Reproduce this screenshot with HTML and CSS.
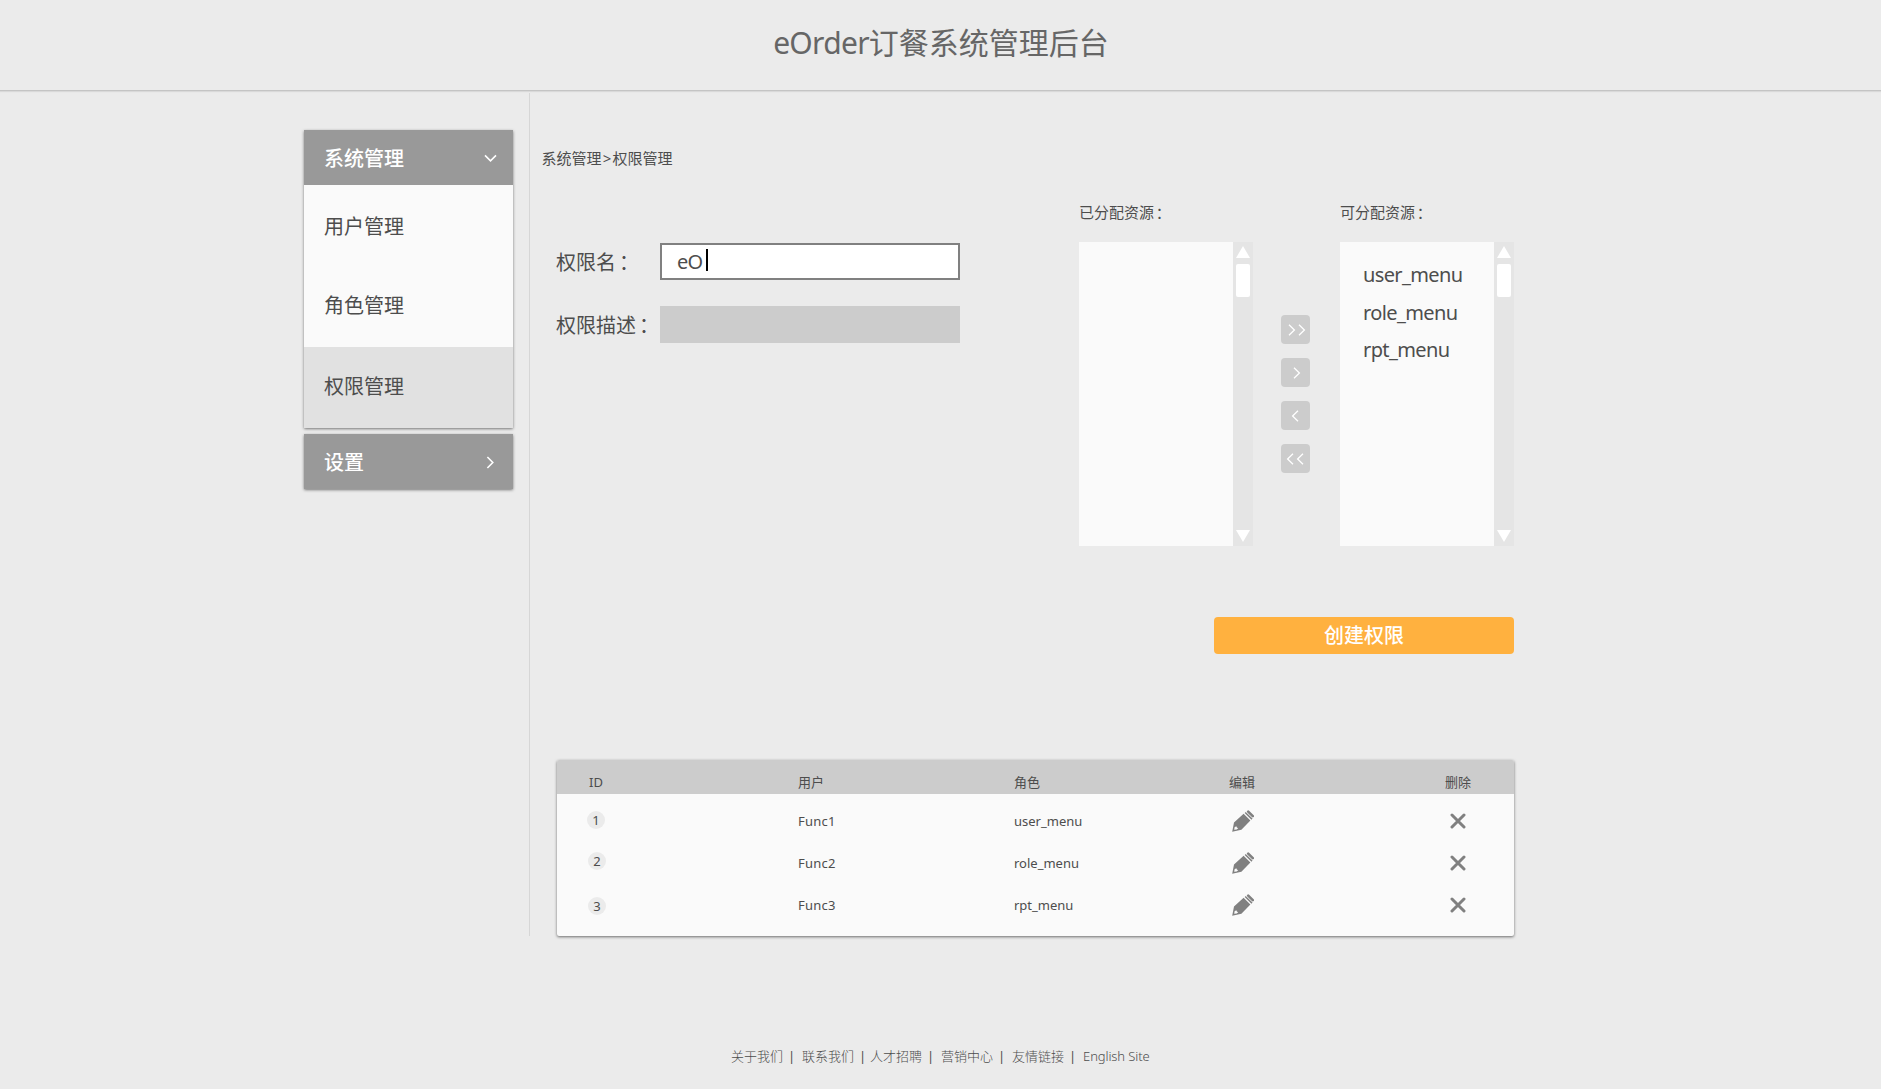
FILE: index.html
```html
<!DOCTYPE html>
<html lang="zh-CN">
<head>
<meta charset="utf-8">
<title>eOrder订餐系统管理后台</title>
<link rel="stylesheet" href="styles.css">
</head>
<body>
<svg class="sprite" width="0" height="0" aria-hidden="true">
  <symbol id="pencil" viewBox="0 0 22 22">
    <path fill="#808080" fill-rule="evenodd" d="M0.2 21.8 2 12.6 11.6 3.8 18.4 10.4 9.4 19.8ZM2.6 17.2 2.2 19.8 4.6 19.4 6.2 18.2 4.9 17.5 4.3 16.2Z"/>
    <path stroke="#808080" stroke-width="1.5" d="m13.2 2.5 6.8 6.6"/>
    <path stroke="#808080" stroke-width="2.6" stroke-linecap="round" d="m16.2 1.6 4.6 4.5"/>
  </symbol>
  <symbol id="cross" viewBox="0 0 16 16">
    <path stroke="#808080" stroke-width="3" stroke-linecap="round" d="m2 2 12 12M14 2 2 14"/>
  </symbol>
  <symbol id="right" viewBox="0 0 8 12">
    <path fill="none" stroke="currentColor" stroke-width="1.3" d="m1 .8 5.4 5.2L1 11.2"/>
  </symbol>
  <symbol id="left" viewBox="0 0 8 12">
    <path fill="none" stroke="currentColor" stroke-width="1.3" d="M7 .8 1.6 6 7 11.2"/>
  </symbol>
</svg>
<header class="top"><h1><span class="lat">eOrder</span>订餐系统管理后台</h1></header>
<main class="main">
  <nav class="side">
    <section class="group">
      <div class="group-head">系统管理<svg class="chev" width="13" height="9" viewBox="0 0 13 9"><path fill="none" stroke="#fff" stroke-width="1.6" d="m1 1.4 5.5 5.4L12 1.4"/></svg></div>
      <a class="item">用户管理</a>
      <a class="item raised">角色管理</a>
      <a class="item raised active">权限管理</a>
    </section>
    <section class="group">
      <div class="group-head">设置<svg class="chev chev-r" width="9" height="13" viewBox="0 0 9 13"><path fill="none" stroke="#fff" stroke-width="1.6" d="m1.4 1 5.4 5.5L1.4 12"/></svg></div>
    </section>
  </nav>
  <div class="content">
    <div class="crumb">系统管理<span class="gt">&gt;</span>权限管理</div>
    <div class="editor">
      <div class="form">
        <div class="field"><label>权限名<span class="colon" lang="zh-TW">：</span></label><div class="input focus"><span class="value">eO</span><span class="caret"></span></div></div>
        <div class="field"><label>权限描述<span class="colon" lang="zh-TW">：</span></label><div class="input"></div></div>
      </div>
      <div class="picker">
        <div class="label">已分配资源<span class="colon" lang="zh-TW">：</span></div>
        <div class="list"><div class="options"></div><div class="bar"><i class="up"></i><i class="thumb"></i><i class="down"></i></div></div>
      </div>
      <div class="moves">
        <button><svg><use href="#right"/></svg><svg><use href="#right"/></svg></button>
        <button><svg><use href="#right"/></svg></button>
        <button class="back"><svg><use href="#left"/></svg></button>
        <button class="back"><svg><use href="#left"/></svg><svg><use href="#left"/></svg></button>
      </div>
      <div class="picker">
        <div class="label">可分配资源<span class="colon" lang="zh-TW">：</span></div>
        <div class="list"><div class="options"><p>user_menu</p><p>role_menu</p><p>rpt_menu</p></div><div class="bar"><i class="up"></i><i class="thumb"></i><i class="down"></i></div></div>
      </div>
    </div>
    <button class="create">创建权限</button>
    <div class="table">
      <div class="row head"><span>ID</span><span>用户</span><span>角色</span><span>编辑</span><span>删除</span></div>
      <div class="rows">
        <div class="row"><span class="badge b1">1</span><span class="func">Func1</span><span>user_menu</span><svg class="pen"><use href="#pencil"/></svg><svg class="del"><use href="#cross"/></svg></div>
        <div class="row"><span class="badge b2">2</span><span class="func">Func2</span><span>role_menu</span><svg class="pen"><use href="#pencil"/></svg><svg class="del"><use href="#cross"/></svg></div>
        <div class="row"><span class="badge b3">3</span><span class="func">Func3</span><span>rpt_menu</span><svg class="pen"><use href="#pencil"/></svg><svg class="del"><use href="#cross"/></svg></div>
      </div>
    </div>
  </div>
</main>
<footer class="foot"><a>关于我们</a><b>|</b><a>联系我们</a><b class="tight">|</b><a>人才招聘</a><b>|</b><a>营销中心</a><b>|</b><a>友情链接</a><b>|</b><a class="en">English Site</a></footer>
</body>
</html>
```
FILE: styles.css
```css
* { box-sizing: border-box; }
body {
  margin: 0;
  height: 1089px;
  background: #ebebeb;
  color: #4d4d4d;
  font-family: "Noto Sans", "Noto Sans CJK SC", sans-serif;
  overflow: hidden;
}
svg { display: block; flex: none; }
.sprite { position: absolute; }
button { border: 0; padding: 0; font: inherit; }
.colon {
  margin-left: -2px;
  font-family: "Noto Sans CJK TC", sans-serif;
  line-height: 1;
  vertical-align: -1px;
}

.top {
  height: 91px;
  border-bottom: 1px solid #c4c4c4;
  box-shadow: 0 1px 1px #d9d9d9;
}
h1 {
  margin: 0;
  padding: 21px 0 0 1px;
  line-height: 44px;
  font-size: 30px;
  font-weight: 400;
  text-align: center;
  color: #666;
}
.lat { letter-spacing: -0.7px; }

.main { display: flex; margin-top: 2px; height: 843px; padding-left: 304px; }
.side { width: 226px; padding: 37px 16px 0 0; border-right: 1px solid #d6d6d6; }
.group { margin-bottom: 6px; box-shadow: 0 1px 3px rgba(0, 0, 0, .5); border-radius: 1px; font-size: 20px; }
.group-head {
  display: flex;
  align-items: center;
  justify-content: space-between;
  height: 55px;
  padding: 0 16px 0 20px;
  background: #999;
  color: #fff;
  font-weight: 500;
}
.chev { margin-top: 1px; }
.chev-r { margin-right: 2px; }
.item { display: flex; align-items: center; height: 81px; padding-left: 20px; background: #fafafa; }
.raised { padding-bottom: 4px; }
.active { background: #e1e1e1; }

.content { width: 984px; }
.crumb { padding: 54px 0 0 11.5px; height: 107px; line-height: 22px; font-size: 15px; }
.gt { display: inline-block; width: 11px; text-align: center; }

.editor { display: flex; height: 346px; padding-left: 26px; }
.form { width: 523px; padding-top: 43px; }
.field { display: flex; align-items: center; height: 37px; margin-bottom: 26px; font-size: 20px; }
.field label { width: 104px; white-space: nowrap; }
.input { display: flex; align-items: center; width: 300px; height: 37px; background: #ccc; }
.focus { background: #fff; border: 2px solid #808080; padding-left: 15px; }
.value { letter-spacing: -.8px; }
.caret { width: 2px; height: 22px; margin: -4px 0 0 4px; background: #000; }

.picker { width: 174px; }
.label { height: 42px; line-height: 24px; font-size: 15px; }
.list { display: flex; height: 304px; }
.options { width: 154px; padding: 14px 0 0 23px; background: #fafafa; }
.options p { margin: 0; height: 37.5px; line-height: 37px; font-size: 20px; letter-spacing: -.62px; }
.bar { display: flex; flex-direction: column; width: 20px; padding: 4px 3px; background: #e5e5e5; }
.up, .down { height: 12px; background: #fff; }
.up { clip-path: polygon(50% 0, 100% 100%, 0 100%); }
.down { margin-top: auto; clip-path: polygon(0 0, 100% 0, 50% 100%); }
.thumb { height: 33px; margin-top: 6px; border-radius: 2px; background: #fff; }
.moves { display: flex; flex-direction: column; gap: 14px; width: 87px; padding: 115px 0 0 28px; }
.moves button {
  display: flex;
  align-items: center;
  justify-content: center;
  gap: 2px;
  width: 29px;
  height: 29px;
  padding-left: 2px;
  border-radius: 4px;
  background: #ccc;
  color: #fff;
}
.moves .back { padding: 0 1px 0 0; }
.moves svg { width: 8px; height: 12px; }

.create {
  display: block;
  width: 300px;
  height: 37px;
  margin: 71px 0 0 684px;
  border-radius: 4px;
  background: #ffb13f;
  color: #fff;
  font-size: 20px;
  font-weight: 500;
  line-height: 38px;
}

.table {
  width: 957px;
  height: 176px;
  margin: 106px 0 0 27px;
  background: #fafafa;
  border-radius: 2px;
  box-shadow: 0 1px 3px rgba(0, 0, 0, .55);
  font-size: 13px;
}
.row {
  display: grid;
  grid-template-columns: 209px 216px 215px 216px 1fr;
  align-items: center;
  height: 42px;
  padding-left: 32px;
}
.head { height: 34px; padding-top: 9px; background: #ccc; border-radius: 2px 2px 0 0; }
.rows { padding-top: 6px; }
.func { letter-spacing: .25px; }
.badge {
  width: 18px;
  height: 18px;
  border-radius: 50%;
  background: #ebebeb;
  line-height: 18px;
  text-align: center;
}
.b1 { margin: -2px 0 0 -2px; }
.b2 { margin: -4px 0 0 -1px; }
.b3 { margin: 2px 0 0 -1px; }
.pen { width: 22px; height: 22px; margin-left: 3px; }
.del { width: 16px; height: 16px; margin-left: 5px; }

.foot {
  display: flex;
  padding: 108px 0 0 731px;
  line-height: 24px;
  font-size: 13px;
  font-weight: 300;
  color: #4d4d4d;
}
.foot a { white-space: nowrap; }
.foot b { width: 19px; padding-left: 5px; font-weight: 400; }
.foot .tight { width: 16px; }
.foot .en { letter-spacing: -.1px; }
```
